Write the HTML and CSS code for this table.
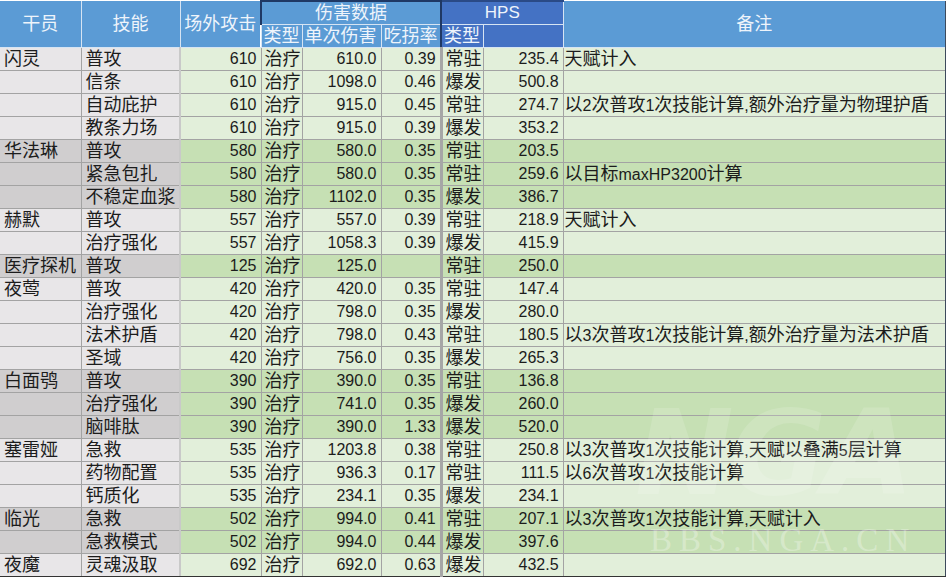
FILE: index.html
```html
<!DOCTYPE html>
<html lang="zh-CN">
<head>
<meta charset="utf-8">
<title>HPS</title>
<link rel="stylesheet" href="styles.css">
</head>
<body>
<div class="sheet">
<table class="grid">
<colgroup>
<col class="c1"><col class="c2"><col class="c3"><col class="c4"><col class="c5"><col class="c6"><col class="c7"><col class="c8"><col class="c9">
</colgroup>
<thead>
<tr class="h1">
<th rowspan="2">干员</th>
<th rowspan="2" class="sep-a">技能</th>
<th rowspan="2">场外攻击</th>
<th colspan="3" class="dmg">伤害数据</th>
<th colspan="2" class="hps hps-top">HPS</th>
<th rowspan="2">备注</th>
</tr>
<tr class="h2">
<th class="dmg-l">类型</th>
<th>单次伤害</th>
<th class="dmg-r">吃拐率</th>
<th class="hps sub">类型</th>
<th class="hps"></th>
</tr>
</thead>
<tbody>
<tr class="ga"><td>闪灵</td><td class="sep-a">普攻</td><td class="n">610</td><td>治疗</td><td class="n">610.0</td><td class="n sep-b">0.39</td><td>常驻</td><td class="n">235.4</td><td>天赋计入</td></tr>
<tr class="ga"><td></td><td class="sep-a">信条</td><td class="n">610</td><td>治疗</td><td class="n">1098.0</td><td class="n sep-b">0.46</td><td>爆发</td><td class="n">500.8</td><td></td></tr>
<tr class="ga"><td></td><td class="sep-a">自动庇护</td><td class="n">610</td><td>治疗</td><td class="n">915.0</td><td class="n sep-b">0.45</td><td>常驻</td><td class="n">274.7</td><td>以<span class="d">2</span>次普攻<span class="d">1</span>次技能计算<span class="d">,</span>额外治疗量为物理护盾</td></tr>
<tr class="ga"><td></td><td class="sep-a">教条力场</td><td class="n">610</td><td>治疗</td><td class="n">915.0</td><td class="n sep-b">0.39</td><td>爆发</td><td class="n">353.2</td><td></td></tr>
<tr class="gb"><td>华法琳</td><td class="sep-a">普攻</td><td class="n">580</td><td>治疗</td><td class="n">580.0</td><td class="n sep-b">0.35</td><td>常驻</td><td class="n">203.5</td><td></td></tr>
<tr class="gb"><td></td><td class="sep-a">紧急包扎</td><td class="n">580</td><td>治疗</td><td class="n">580.0</td><td class="n sep-b">0.35</td><td>常驻</td><td class="n">259.6</td><td>以目标<span class="d">maxHP3200</span>计算</td></tr>
<tr class="gb"><td></td><td class="sep-a">不稳定血浆</td><td class="n">580</td><td>治疗</td><td class="n">1102.0</td><td class="n sep-b">0.35</td><td>爆发</td><td class="n">386.7</td><td></td></tr>
<tr class="ga"><td>赫默</td><td class="sep-a">普攻</td><td class="n">557</td><td>治疗</td><td class="n">557.0</td><td class="n sep-b">0.39</td><td>常驻</td><td class="n">218.9</td><td>天赋计入</td></tr>
<tr class="ga"><td></td><td class="sep-a">治疗强化</td><td class="n">557</td><td>治疗</td><td class="n">1058.3</td><td class="n sep-b">0.39</td><td>爆发</td><td class="n">415.9</td><td></td></tr>
<tr class="gb"><td>医疗探机</td><td class="sep-a">普攻</td><td class="n">125</td><td>治疗</td><td class="n">125.0</td><td class="n sep-b"></td><td>常驻</td><td class="n">250.0</td><td></td></tr>
<tr class="ga"><td>夜莺</td><td class="sep-a">普攻</td><td class="n">420</td><td>治疗</td><td class="n">420.0</td><td class="n sep-b">0.35</td><td>常驻</td><td class="n">147.4</td><td></td></tr>
<tr class="ga"><td></td><td class="sep-a">治疗强化</td><td class="n">420</td><td>治疗</td><td class="n">798.0</td><td class="n sep-b">0.35</td><td>爆发</td><td class="n">280.0</td><td></td></tr>
<tr class="ga"><td></td><td class="sep-a">法术护盾</td><td class="n">420</td><td>治疗</td><td class="n">798.0</td><td class="n sep-b">0.43</td><td>常驻</td><td class="n">180.5</td><td>以<span class="d">3</span>次普攻<span class="d">1</span>次技能计算<span class="d">,</span>额外治疗量为法术护盾</td></tr>
<tr class="ga"><td></td><td class="sep-a">圣域</td><td class="n">420</td><td>治疗</td><td class="n">756.0</td><td class="n sep-b">0.35</td><td>爆发</td><td class="n">265.3</td><td></td></tr>
<tr class="gb"><td>白面鸮</td><td class="sep-a">普攻</td><td class="n">390</td><td>治疗</td><td class="n">390.0</td><td class="n sep-b">0.35</td><td>常驻</td><td class="n">136.8</td><td></td></tr>
<tr class="gb"><td></td><td class="sep-a">治疗强化</td><td class="n">390</td><td>治疗</td><td class="n">741.0</td><td class="n sep-b">0.35</td><td>爆发</td><td class="n">260.0</td><td></td></tr>
<tr class="gb"><td></td><td class="sep-a">脑啡肽</td><td class="n">390</td><td>治疗</td><td class="n">390.0</td><td class="n sep-b">1.33</td><td>爆发</td><td class="n">520.0</td><td></td></tr>
<tr class="ga"><td>塞雷娅</td><td class="sep-a">急救</td><td class="n">535</td><td>治疗</td><td class="n">1203.8</td><td class="n sep-b">0.38</td><td>常驻</td><td class="n">250.8</td><td>以<span class="d">3</span>次普攻<span class="d">1</span>次技能计算<span class="d">,</span>天赋以叠满<span class="d">5</span>层计算</td></tr>
<tr class="ga"><td></td><td class="sep-a">药物配置</td><td class="n">535</td><td>治疗</td><td class="n">936.3</td><td class="n sep-b">0.17</td><td>常驻</td><td class="n">111.5</td><td>以<span class="d">6</span>次普攻<span class="d">1</span>次技能计算</td></tr>
<tr class="ga"><td></td><td class="sep-a">钙质化</td><td class="n">535</td><td>治疗</td><td class="n">234.1</td><td class="n sep-b">0.35</td><td>爆发</td><td class="n">234.1</td><td></td></tr>
<tr class="gb"><td>临光</td><td class="sep-a">急救</td><td class="n">502</td><td>治疗</td><td class="n">994.0</td><td class="n sep-b">0.41</td><td>常驻</td><td class="n">207.1</td><td>以<span class="d">3</span>次普攻<span class="d">1</span>次技能计算<span class="d">,</span>天赋计入</td></tr>
<tr class="gb"><td></td><td class="sep-a">急救模式</td><td class="n">502</td><td>治疗</td><td class="n">994.0</td><td class="n sep-b">0.44</td><td>爆发</td><td class="n">397.6</td><td></td></tr>
<tr class="ga last"><td>夜魔</td><td class="sep-a">灵魂汲取</td><td class="n">692</td><td>治疗</td><td class="n">692.0</td><td class="n sep-b">0.63</td><td>爆发</td><td class="n">432.5</td><td></td></tr>
</tbody>
</table>
<div class="watermark" aria-hidden="true">
<div class="wm-logo">NGA</div>
<div class="wm-text">BBS.NGA.CN</div>
</div>
</div>
</body>
</html>
```

FILE: styles.css
```css
html, body {
  margin: 0;
  padding: 0;
  background: #ffffff;
}
body {
  width: 946px;
  height: 577px;
  overflow: hidden;
  font-family: "Liberation Sans", "Noto Sans CJK SC", sans-serif;
  color: #1c1c1c;
}
.sheet {
  position: relative;
  width: 946px;
  height: 577px;
  overflow: hidden;
}
.grid {
  width: 946px;
  table-layout: fixed;
  border-collapse: collapse;
  border-spacing: 0;
}
.c1 { width: 81px; }
.c2 { width: 99px; }
.c3 { width: 81px; }
.c4 { width: 41px; }
.c5 { width: 79px; }
.c6 { width: 60px; }
.c7 { width: 42px; }
.c8 { width: 80px; }
.c9 { width: 383px; }

th {
  background: #5b9bd5;
  color: #eef4fb;
  font-weight: normal;
  font-size: 18px;
  line-height: 20px;
  height: 22px;
  padding: 0;
  border: 1px solid #d6e4f3;
  text-align: center;
  white-space: nowrap;
  overflow: hidden;
}
.h1 th { border-top: none; }
.h1 th:first-child, .h2 th:first-child { border-left: none; }
.h1 th:last-child { border-right: 2px solid #3d4a5c; }
.h2 th { text-align: left; padding-left: 2px; }
th.dmg {
  border-top: 2px solid #1f3864;
  border-left: 2px solid #1f3864;
}
th.hps {
  background: #4472c4;
}
th.hps-top { border-left: 2px solid #1f3864; border-top: 2px solid #2a4a86; font-family: "Liberation Sans", sans-serif; font-size: 17px; }
.h2 th.sub { border-left: 2px solid #1f3864; }

td {
  font-size: 18px;
  line-height: 20px;
  height: 22px;
  padding: 0 3px;
  border: 1px solid #a3a3a3;
  white-space: nowrap;
  overflow: hidden;
  text-align: left;
  vertical-align: middle;
}
td:first-child { border-left: none; padding-left: 4px; }
td:last-child { border-right: 2px solid #3d4a5c; padding-left: 1px; }
td.n { text-align: right; padding-right: 4px; font-size: 16px; }
td .d { font-size: 16px; }
td.sep-a { border-right: 2px solid #c9c9c9; padding-left: 4px; }
td.sep-b { border-right: 3px solid #a6a6a6; }
tr.last td { border-bottom: 2px solid #333333; }

.ga td { background: #e2efda; }
.ga td:nth-child(1), .ga td:nth-child(2) { background: #e8e6e8; }
.gb td { background: #c6e0b4; }
.gb td:nth-child(1), .gb td:nth-child(2) { background: #d0cecf; }

.watermark {
  position: absolute;
  left: 630px;
  top: 388px;
  width: 300px;
  height: 180px;
  pointer-events: none;
}
.wm-logo {
  color: rgba(255, 255, 255, 0.14);
  font-family: "DejaVu Sans", sans-serif;
  font-weight: bold;
  font-size: 118px;
  line-height: 130px;
  letter-spacing: -4px;
  text-align: right;
  padding-right: 20px;
  font-style: italic;
}
.wm-text {
  color: rgba(255, 255, 255, 0.3);
  font-family: "Liberation Serif", serif;
  font-size: 33px;
  line-height: 44px;
  letter-spacing: 7px;
  padding-left: 20px;
}
```
